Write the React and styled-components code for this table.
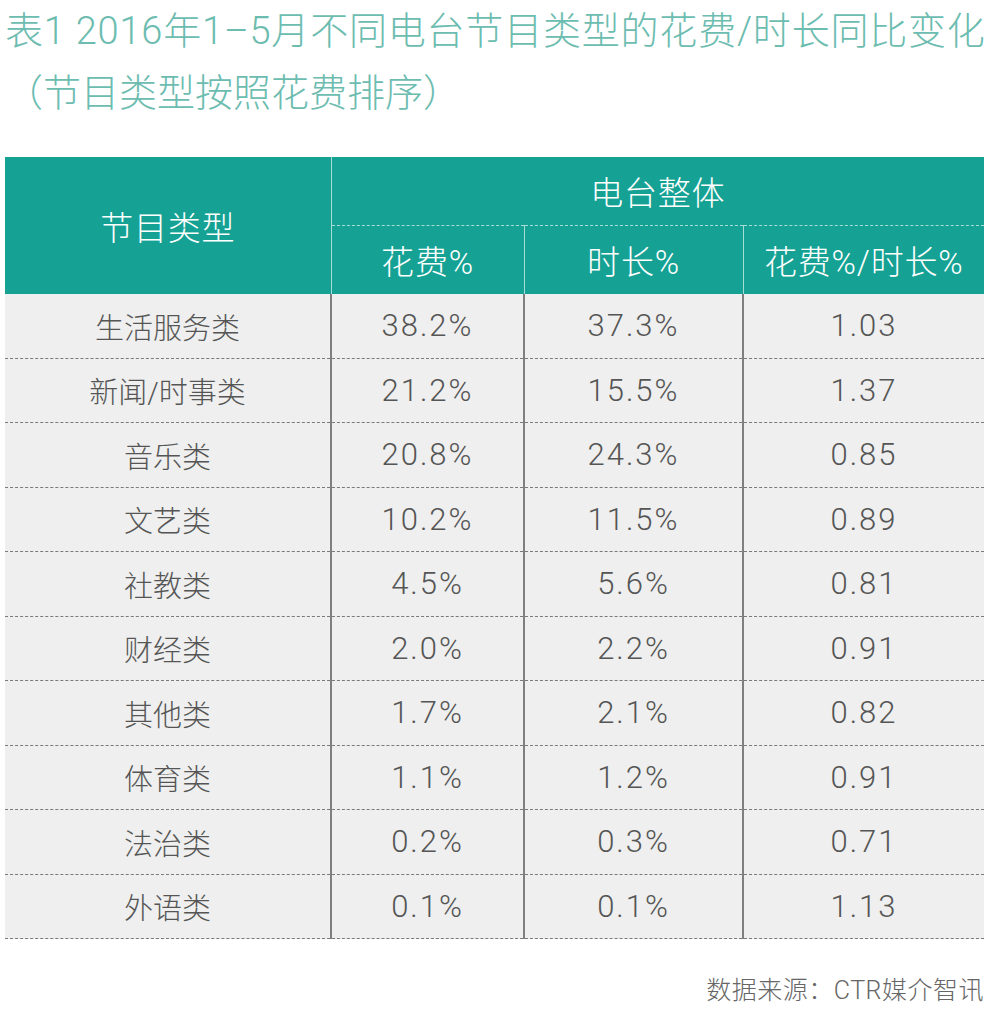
import React from "react";
import styled, { createGlobalStyle } from "styled-components";

const GlobalStyle = createGlobalStyle`
  body {
    margin: 0;
    background: #ffffff;
    font-family: Roboto, "Noto Sans CJK SC", sans-serif;
  }
`;

const Page = styled.div`
  width: 994px;
  padding: 0 10px 0 5px;
  box-sizing: border-box;
`;

const Title = styled.h1`
  margin: 0;
  font-size: 38px;
  font-weight: 300;
  line-height: 62px;
  color: #6cbcb0;
  letter-spacing: 0.8px;
  white-space: nowrap;
`;

const SubTitle = styled.span`
  letter-spacing: 0;
`;

const Table = styled.table`
  margin-top: 33px;
  width: 979px;
  border-collapse: collapse;
  table-layout: fixed;
`;

const HeadCell = styled.th`
  background: #15a294;
  color: #ffffff;
  font-weight: 300;
  font-size: 33px;
  letter-spacing: 0.8px;
  height: 68px;
  padding: 0;
  text-align: center;
  border-left: ${(p) => (p.first ? "none" : "1px solid #a8dcd5")};
  border-top: ${(p) => (p.sub ? "1px dashed #a8dcd5" : "none")};
  vertical-align: middle;
`;

const Row = styled.tr`
  background: #eeefee;
  border-bottom: 1px dashed #7a7a7a;
`;

const Cell = styled.td`
  height: 63.5px;
  padding: 0;
  text-align: center;
  font-size: ${(p) => (p.first ? "29px" : "31px")};
  font-weight: 300;
  letter-spacing: ${(p) => (p.first ? "0" : "2px")};
  color: #555555;
  border-left: ${(p) => (p.first ? "none" : "2px solid #7f7f7f")};
`;

const Source = styled.div`
  margin-top: 31px;
  text-align: right;
  font-size: 25px;
  font-weight: 300;
  letter-spacing: 0.5px;
  color: #666666;
`;

const rows = [
  ["生活服务类", "38.2%", "37.3%", "1.03"],
  ["新闻/时事类", "21.2%", "15.5%", "1.37"],
  ["音乐类", "20.8%", "24.3%", "0.85"],
  ["文艺类", "10.2%", "11.5%", "0.89"],
  ["社教类", "4.5%", "5.6%", "0.81"],
  ["财经类", "2.0%", "2.2%", "0.91"],
  ["其他类", "1.7%", "2.1%", "0.82"],
  ["体育类", "1.1%", "1.2%", "0.91"],
  ["法治类", "0.2%", "0.3%", "0.71"],
  ["外语类", "0.1%", "0.1%", "1.13"],
];

function App() {
  return (
    <>
      <GlobalStyle />
      <Page>
        <Title>
          表1 2016年1–5月不同电台节目类型的花费/时长同比变化
          <br />
          <SubTitle>（节目类型按照花费排序）</SubTitle>
        </Title>
        <Table>
          <colgroup>
            <col style={{ width: 326 }} />
            <col style={{ width: 193 }} />
            <col style={{ width: 219 }} />
            <col style={{ width: 241 }} />
          </colgroup>
          <thead>
            <tr>
              <HeadCell first rowSpan={2}>
                节目类型
              </HeadCell>
              <HeadCell colSpan={3}>电台整体</HeadCell>
            </tr>
            <tr>
              <HeadCell sub>花费%</HeadCell>
              <HeadCell sub>时长%</HeadCell>
              <HeadCell sub>花费%/时长%</HeadCell>
            </tr>
          </thead>
          <tbody>
            {rows.map((r) => (
              <Row key={r[0]}>
                <Cell first>{r[0]}</Cell>
                <Cell>{r[1]}</Cell>
                <Cell>{r[2]}</Cell>
                <Cell>{r[3]}</Cell>
              </Row>
            ))}
          </tbody>
        </Table>
        <Source>数据来源：CTR媒介智讯</Source>
      </Page>
    </>
  );
}

export default App;
